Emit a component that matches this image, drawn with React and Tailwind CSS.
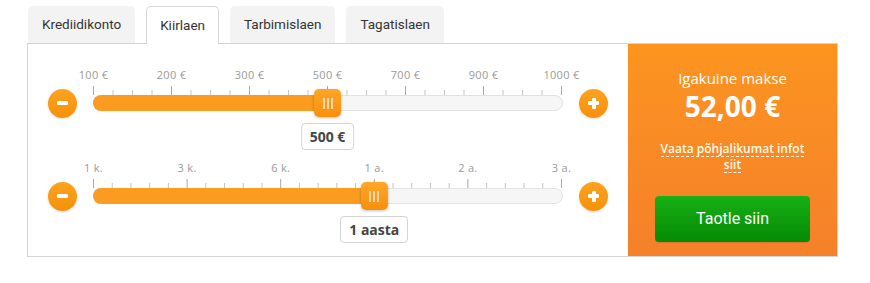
import React from "react";

const tabs = ["Krediidikonto", "Kiirlaen", "Tarbimislaen", "Tagatislaen"];

const amountSlider = {
  labels: ["100 €", "200 €", "300 €", "500 €", "700 €", "900 €", "1000 €"],
  minorPerMajor: 3,
  value: 0.5,
  valueLabel: "500 €",
};

const periodSlider = {
  labels: ["1 k.", "3 k.", "6 k.", "1 a.", "2 a.", "3 a."],
  minorPerMajor: 4,
  value: 0.6,
  valueLabel: "1 aasta",
};

const TRACK_W = 470;
const SPAN = 468;

function RoundButton({ plus }) {
  return (
    <button className="w-[29px] h-[29px] shrink-0 rounded-full bg-gradient-to-b from-[#fda21f] to-[#f59108] shadow-[0_1px_2px_rgba(0,0,0,0.15)] flex items-center justify-center relative">
      <span className="block w-[11px] h-[4px] bg-white rounded-[1px]" />
      {plus && (
        <span className="absolute block w-[4px] h-[11px] bg-white rounded-[1px]" />
      )}
    </button>
  );
}

function Ticks({ majors, minorPerMajor }) {
  const steps = (majors - 1) * (minorPerMajor + 1);
  const lines = [];
  for (let i = 0; i <= steps; i++) {
    const x = 0.5 + (SPAN * i) / steps;
    const major = i % (minorPerMajor + 1) === 0;
    lines.push(
      <line
        key={i}
        x1={x}
        x2={x}
        y1={major ? 0 : 4}
        y2={9}
        stroke={major ? "#a8a8a8" : "#c4c4c4"}
        strokeWidth="1"
      />
    );
  }
  return (
    <svg width={TRACK_W} height="9" className="block">
      {lines}
    </svg>
  );
}

function Slider({ labels, minorPerMajor, value, valueLabel }) {
  const pos = 0.5 + SPAN * value;

  return (
    <div className="flex flex-col">
      {/* scale labels */}
      <div className="ml-[65px] w-[470px] h-[14px] relative">
        {labels.map((l, i) => (
          <span
            key={l}
            className="absolute top-0 -translate-x-1/2 whitespace-nowrap text-[11px] leading-[14px] tracking-[0.3px] text-[#9a9a9a]"
            style={{ left: 0.5 + (SPAN * i) / (labels.length - 1) }}
          >
            {l}
          </span>
        ))}
      </div>

      {/* ticks */}
      <div className="ml-[65px] mt-[4px]">
        <Ticks majors={labels.length} minorPerMajor={minorPerMajor} />
      </div>

      {/* track row */}
      <div className="h-[16px] flex items-center pl-[20px] gap-[16px]">
        <RoundButton />
        <div className="w-[470px] h-[16px] shrink-0 relative rounded-full bg-[#f6f6f6] border border-[#e2e2e2]">
          <div
            className="absolute -left-px -top-px h-[16px] rounded-l-full bg-[#fb9b1f]"
            style={{ width: pos }}
          />
          <div
            className="absolute -top-[7px] w-[27px] h-[28px] rounded-[5px] bg-gradient-to-b from-[#ffa627] to-[#f78f0b] shadow-[0_1px_3px_rgba(0,0,0,0.25)] flex items-center justify-center gap-[2px]"
            style={{ left: pos - 14.5 }}
          >
            <span className="block w-[2px] h-[11px] bg-[#ffd6a6]" />
            <span className="block w-[2px] h-[11px] bg-[#ffd6a6]" />
            <span className="block w-[2px] h-[11px] bg-[#ffd6a6]" />
          </div>
        </div>
        <RoundButton plus />
      </div>

      {/* current value */}
      <div className="ml-[65px] w-[470px] h-[27px] mt-[12px] relative">
        <div
          className="absolute top-0 -translate-x-1/2 h-[27px] px-[8px] flex items-center rounded-[4px] border border-[#d3d3d3] bg-white text-[14px] font-bold text-[#454545] whitespace-nowrap"
          style={{ left: pos }}
        >
          {valueLabel}
        </div>
      </div>
    </div>
  );
}

export default function App() {
  return (
    <div className="bg-white w-[870px] h-[283px] pl-[27px] pt-[6px] font-['Open_Sans',sans-serif]">
      {/* Tabs */}
      <div className="flex gap-[11px] pl-px">
        {tabs.map((t, i) => (
          <div
            key={t}
            className={
              i === 1
                ? "h-[38px] -mb-px px-[13px] flex items-center rounded-t-[5px] bg-white border border-b-0 border-[#d6d6d6] text-[13.5px] text-[#333] font-['Roboto',sans-serif] relative z-10"
                : "h-[37px] px-[14px] flex items-center rounded-t-[5px] bg-[#f3f3f3] text-[13.5px] text-[#333] font-['Roboto',sans-serif]"
            }
          >
            {t}
          </div>
        ))}
      </div>

      {/* Calculator box */}
      <div className="w-[811px] h-[214px] border border-[#d4d4d4] flex">
        <div className="w-[600px] pt-[24px] flex flex-col gap-[11px]">
          <Slider {...amountSlider} />
          <Slider {...periodSlider} />
        </div>

        <div className="w-[209px] bg-gradient-to-b from-[#fc941f] to-[#f5802a] flex flex-col items-center text-white">
          <div className="mt-[24px] text-[15px] leading-[20px]">Igakuine makse</div>
          <div className="mt-[2px] text-[28px] leading-[32px] font-bold">52,00 €</div>
          <div className="mt-[20px] flex flex-col items-center gap-[1px] text-[12px] leading-[14px] font-semibold text-[#fffbea]">
            <span className="inline-block border-b border-dashed border-[#fffbea]">
              Vaata põhjalikumat infot
            </span>
            <span className="inline-block border-b border-dashed border-[#fffbea]">siit</span>
          </div>
          <button className="mt-[23px] w-[155px] h-[46px] rounded-[4px] bg-gradient-to-b from-[#17b015] to-[#058a05] text-white text-[16px] font-normal font-['Roboto',sans-serif] shadow-[0_1px_1px_rgba(0,0,0,0.1)]">
            Taotle siin
          </button>
        </div>
      </div>
    </div>
  );
}
